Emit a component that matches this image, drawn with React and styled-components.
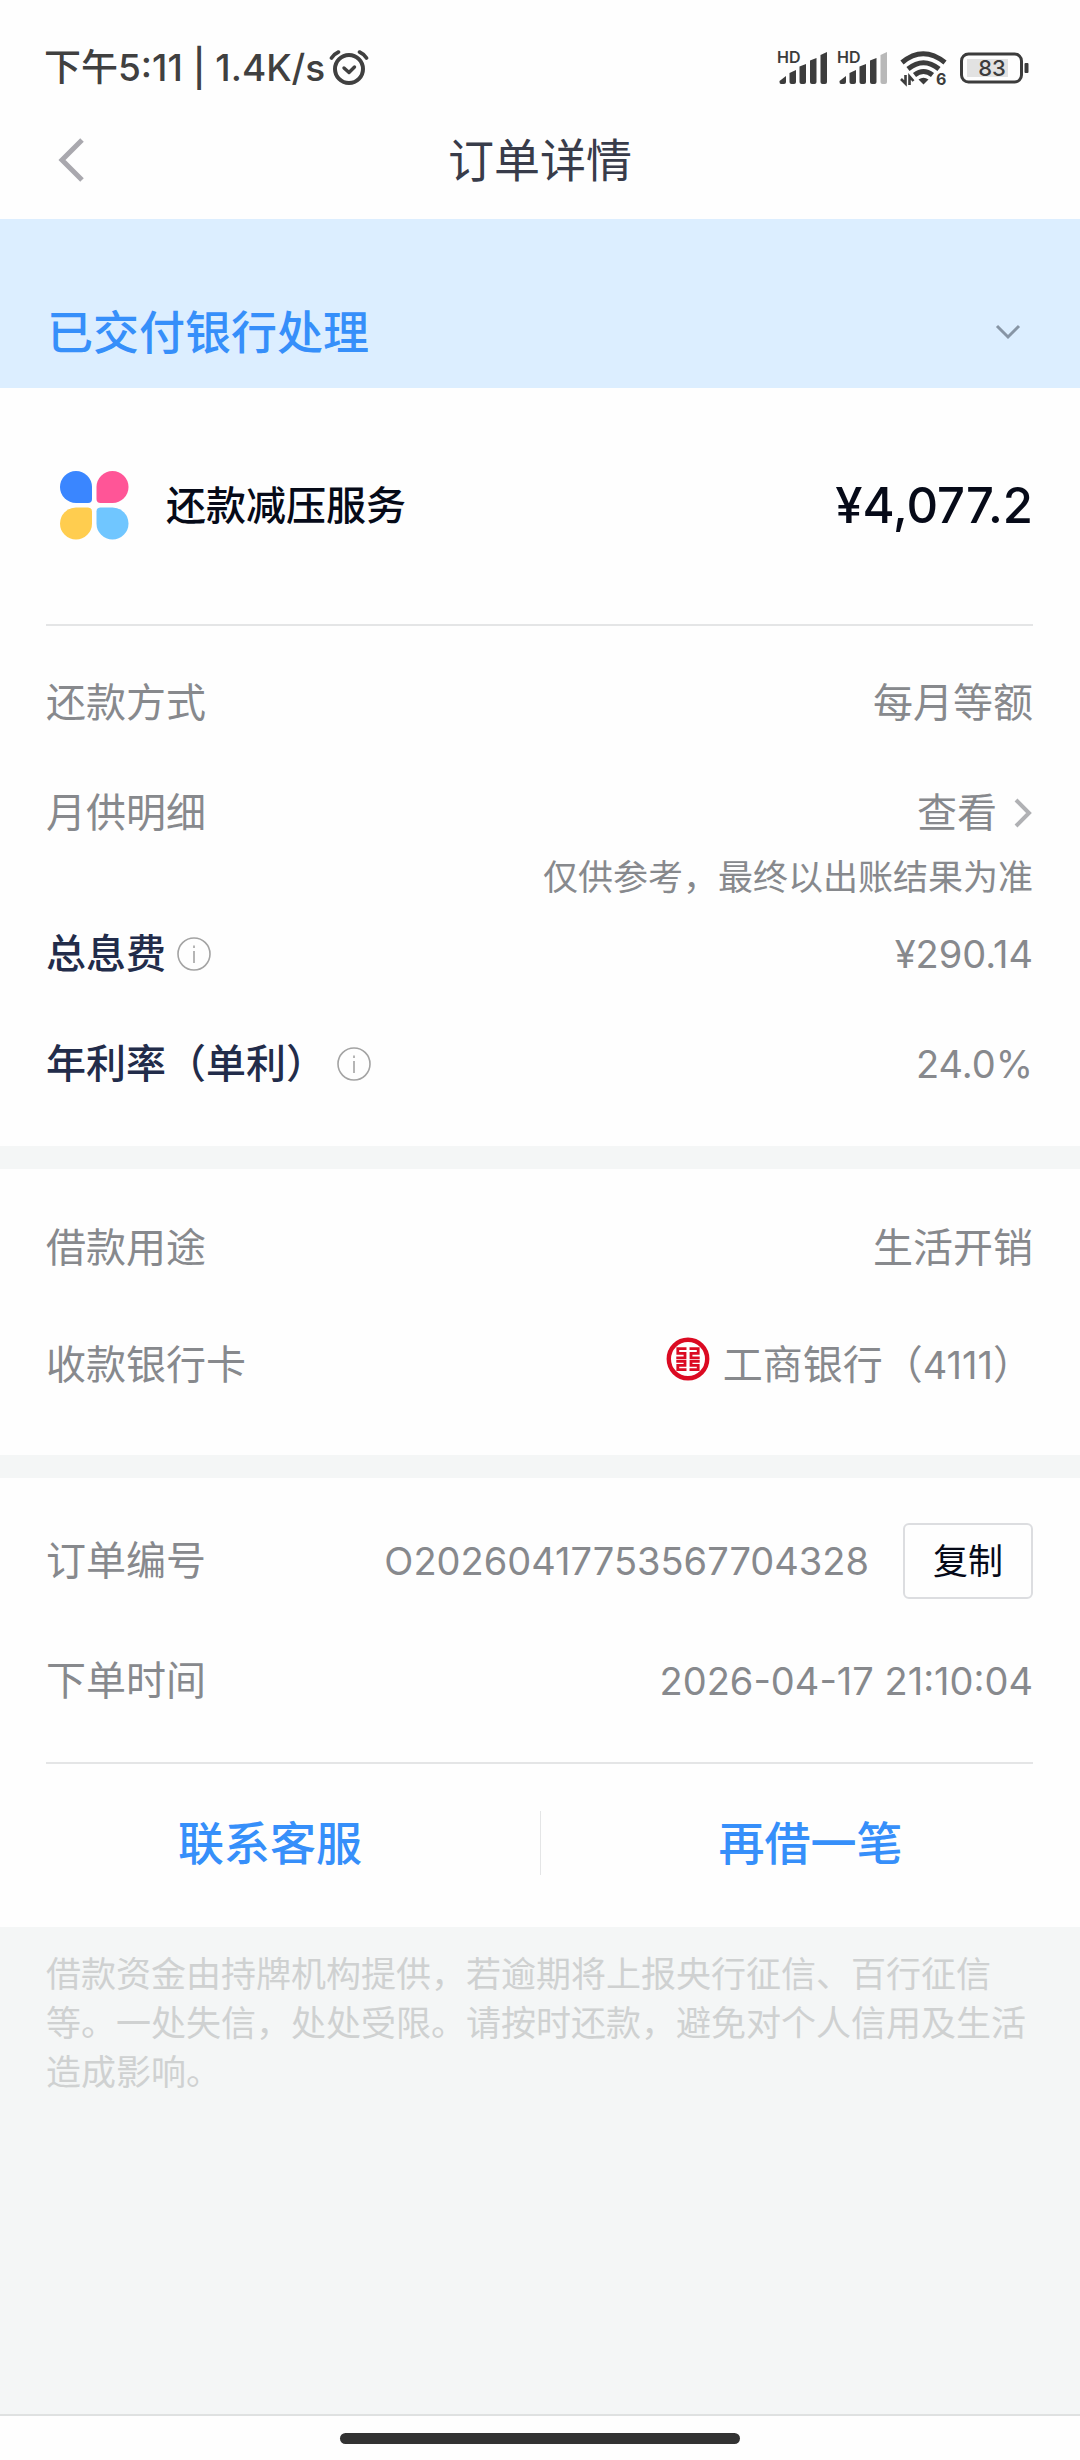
import React, { useState } from "react";
import styled, { createGlobalStyle } from "styled-components";

const rows = {
  method: "每月等额",
  interest: "¥290.14",
  rate: "24.0%",
  usage: "生活开销",
  orderNo: "O20260417753567704328",
  time: "2026-04-17 21:10:04",
};

function AlarmIcon() {
  return (
    <svg width="40" height="36" viewBox="0 0 40 36" fill="none" stroke="#404040" strokeLinecap="round">
      <circle cx="20" cy="19" r="14" strokeWidth="4" />
      <path d="M15 18 L20 22.500 L25.500 17" strokeWidth="3.400" strokeLinejoin="round" />
      <path d="M2.500 8 Q5 4 9.500 2 M37.500 8 Q35 4 30.500 2" strokeWidth="3.600" />
    </svg>
  );
}

function SignalIcon({ weak }) {
  return (
    <svg width="50" height="44" viewBox="0 -4 50 44" fill="#3c3c3c">
      <text x="0" y="13" fontFamily="Inter, sans-serif" fontWeight="600" fontSize="16">
        HD
      </text>
      <path d="M2.500 31 L9 26 V32 Q9 34 7 34 H4 Q2.500 34 2.500 32 Z" />
      <path d="M12.500 23 L19 20 V32 Q19 34 17 34 H14.500 Q12.500 34 12.500 32 Z" />
      <path d="M22.500 16.500 L29 14 V32 Q29 34 27 34 H24.500 Q22.500 34 22.500 32 Z" />
      <path d="M33 10.500 L39.500 8 V32 Q39.500 34 37.500 34 H35 Q33 34 33 32 Z" />
      <path d="M43.500 5 L50 2 V32 Q50 34 48 34 H45.500 Q43.500 34 43.500 32 Z" fill={weak ? "#b8b8b8" : "#3c3c3c"} />
    </svg>
  );
}

function WifiIcon() {
  return (
    <svg width="52" height="44" viewBox="-3 -4 52 44" fill="none" stroke="#3c3c3c">
      <path d="M2 12.500 Q23 -5 45 12.500" strokeWidth="5" />
      <path d="M8 19 Q23.500 6.500 39 19" strokeWidth="5" />
      <path d="M14.500 25 Q23.500 18 32.500 25" strokeWidth="5" />
      <path d="M18.500 29.500 Q23.500 26 28.500 29.500 L23.500 34.500 Z" fill="#3c3c3c" stroke="none" />
      <path d="M1 29 L5.500 33.500 V25 M9.500 35 V26.500 L13.500 31" strokeWidth="2.600" />
      <text x="36" y="35" fontFamily="Inter, sans-serif" fontWeight="700" fontSize="16" fill="#3c3c3c" stroke="none">
        6
      </text>
    </svg>
  );
}

function BatteryIcon() {
  return (
    <svg width="70" height="32" viewBox="0 0 70 32">
      <rect x="8" y="7" width="41" height="18" fill="#e2e2e2" />
      <rect x="2.500" y="2" width="60" height="28" rx="7" fill="none" stroke="#3c3c3c" strokeWidth="3" />
      <rect x="65.500" y="11" width="4" height="10" rx="1" fill="#3c3c3c" />
      <text x="33" y="24" textAnchor="middle" fontFamily="Inter, sans-serif" fontWeight="500" fontSize="22" fill="#3c3c3c">
        83
      </text>
    </svg>
  );
}

function PetalIcon() {
  const petal = "M16 0 A16 16 0 0 1 32 16 V28 A4 4 0 0 1 28 32 H16 A16 16 0 0 1 16 0 Z";
  return (
    <svg width="70" height="70" viewBox="0 0 70 70">
      <path d={petal} fill="#3a86ff" />
      <path d={petal} fill="#ff5597" transform="translate(68.500 0) scale(-1 1)" />
      <path d={petal} fill="#ffcd4f" transform="translate(0 68.500) scale(1 -1)" />
      <path d={petal} fill="#70c6ff" transform="translate(68.500 68.500) scale(-1 -1)" />
    </svg>
  );
}

function BankIcon() {
  return (
    <svg width="44" height="44" viewBox="0 0 44 44" fill="none" stroke="#db0a22">
      <circle cx="22" cy="22" r="19.200" strokeWidth="4.400" />
      <path d="M20.500 11.600 H11.800 V16.400 H19 V20.800 H10.300" strokeWidth="2.800" />
      <path d="M23.500 11.600 H32.200 V16.400 H25 V20.800 H33.700" strokeWidth="2.800" />
      <path d="M10.300 24.400 H19 V28.400 H11.800 V32.600 H20.500" strokeWidth="2.800" />
      <path d="M33.700 24.400 H25 V28.400 H32.200 V32.600 H23.500" strokeWidth="2.800" />
    </svg>
  );
}

function InfoIcon() {
  return (
    <svg width="36" height="36" viewBox="0 0 36 36" fill="none" stroke="#a3a3a3" strokeWidth="1.600">
      <circle cx="18" cy="18" r="16" />
      <path d="M18 15 V27 M18 9.500 V12" />
    </svg>
  );
}

function Chevron({ d, width, height, color, stroke }) {
  return (
    <svg width={width} height={height} viewBox={`0 0 ${width} ${height}`} fill="none" stroke={color} strokeWidth={stroke}>
      <path d={d} />
    </svg>
  );
}

function App() {
  const [open, setOpen] = useState(false);

  const copyOrder = () => {
    if (navigator.clipboard) {
      navigator.clipboard.writeText(rows.orderNo);
    }
  };

  return (
    <Page lang="zh-CN">
      <GlobalStyle />
      <StatusBar>
        <StatusGroup $gap="4px">
          <span>下午5:11 | 1.4K/s</span>
          <AlarmIcon />
        </StatusGroup>
        <StatusGroup $gap="10px">
          <SignalIcon />
          <SignalIcon weak />
          <WifiIcon />
          <BatteryIcon />
        </StatusGroup>
      </StatusBar>
      <NavBar>
        <BackButton aria-label="返回">
          <Chevron width={28} height={44} d="M25 2 L5 22 L25 42" color="#a9a8ae" stroke={5} />
        </BackButton>
        <h1>订单详情</h1>
      </NavBar>
      <Banner onClick={() => setOpen(!open)} aria-expanded={open}>
        <span>已交付银行处理</span>
        <Chevron width={26} height={16} d="M2 2 L13 13 L24 2" color="#8795a5" stroke={3} />
      </Banner>

      <Section>
        <Product>
          <PetalIcon />
          <h2>还款减压服务</h2>
          <strong>¥4,077.2</strong>
        </Product>
        <Divider />
        <Details $top="49px" $bottom="54px">
          <Row>
            <dt>还款方式</dt>
            <dd>{rows.method}</dd>
          </Row>
          <Row $gap="12px">
            <dt>月供明细</dt>
            <dd>
              <ViewLink href="#plan">
                查看
                <Chevron width={20} height={30} d="M3 2 L16 15 L3 28" color="#b0b1b4" stroke={4} />
              </ViewLink>
            </dd>
          </Row>
          <Note>仅供参考，最终以出账结果为准</Note>
          <Row>
            <dt className="strong">
              总息费
              <InfoButton aria-label="总息费说明">
                <InfoIcon />
              </InfoButton>
            </dt>
            <dd>
              <Num>{rows.interest}</Num>
            </dd>
          </Row>
          <Row>
            <dt className="strong">
              年利率（单利）
              <InfoButton aria-label="年利率说明">
                <InfoIcon />
              </InfoButton>
            </dt>
            <dd>
              <Num>{rows.rate}</Num>
            </dd>
          </Row>
        </Details>
      </Section>

      <Section>
        <Details $top="51px" $bottom="62px">
          <Row $gap="61px">
            <dt>借款用途</dt>
            <dd>{rows.usage}</dd>
          </Row>
          <Row>
            <dt>收款银行卡</dt>
            <BankCard>
              <BankIcon />
              <span>
                工商银行（<Num>4111</Num>）
              </span>
            </BankCard>
          </Row>
        </Details>
      </Section>

      <Section>
        <Details $top="45px" $bottom="53px">
          <Row>
            <dt>订单编号</dt>
            <dd>
              <Num>{rows.orderNo}</Num>
              <CopyButton onClick={copyOrder}>复制</CopyButton>
            </dd>
          </Row>
          <Row>
            <dt>下单时间</dt>
            <dd>
              <Num>{rows.time}</Num>
            </dd>
          </Row>
        </Details>
        <Divider />
        <Actions>
          <button>联系客服</button>
          <button>再借一笔</button>
        </Actions>
      </Section>

      <Disclaimer>
        借款资金由持牌机构提供，若逾期将上报央行征信、百行征信等。一处失信，处处受限。请按时还款，避免对个人信用及生活造成影响。
      </Disclaimer>
      <HomeBar>
        <div />
      </HomeBar>
    </Page>
  );
}

const GlobalStyle = createGlobalStyle`
  * {
    box-sizing: border-box;
  }
  body {
    margin: 0;
    background: #f4f6f6;
  }
  h1, h2, p, dl, dd {
    margin: 0;
  }
  button {
    font-family: inherit;
    line-height: inherit;
    border: none;
    background: none;
    padding: 0;
    cursor: pointer;
  }
  svg {
    flex-shrink: 0;
    display: block;
  }
`;

const Page = styled.div`
  display: flex;
  flex-direction: column;
  min-height: 100vh;
  font-family: Inter, "Noto Sans CJK SC", sans-serif;
  font-size: 40px;
  line-height: 56px;
  color: #87898d;
`;

const StatusBar = styled.header`
  display: flex;
  justify-content: space-between;
  align-items: center;
  padding: 40px 51px 4px 44px;
  background: #fefefe;
`;

const StatusGroup = styled.div`
  display: flex;
  align-items: center;
  gap: ${(props) => props.$gap};
  font-size: 37px;
  font-weight: 500;
  color: #404040;
`;

const NavBar = styled.nav`
  display: grid;
  grid-template-columns: 90px 1fr 90px;
  align-items: center;
  height: 119px;
  background: #fefefe;
  h1 {
    font-size: 46px;
    font-weight: 400;
    text-align: center;
    color: #383c4a;
  }
`;

const BackButton = styled.button`
  display: flex;
  justify-content: flex-end;
  padding: 5px;
`;

const Banner = styled.button`
  display: flex;
  justify-content: space-between;
  align-items: center;
  padding: 85px 59px 28px 47px;
  background: #dceeff;
  font-size: 46px;
  font-weight: 500;
  color: #368ffa;
`;

const Section = styled.section`
  background: #fefefe;
  & + & {
    margin-top: 23px;
  }
`;

const Divider = styled.hr`
  height: 2px;
  margin: 0 47px 0 46px;
  border: none;
  background: #e4e5e6;
`;

const Product = styled.div`
  display: flex;
  align-items: center;
  height: 236px;
  padding: 0 47px 0 60px;
  color: #060a18;
  h2 {
    flex: 1;
    margin-left: 36px;
    font-size: 40px;
    font-weight: 500;
  }
  strong {
    font-size: 49px;
    font-weight: 500;
  }
`;

const Details = styled.dl`
  padding: ${(props) => props.$top} 47px ${(props) => props.$bottom} 46px;
`;

const Row = styled.div`
  display: flex;
  justify-content: space-between;
  align-items: center;
  margin-bottom: ${(props) => props.$gap || "54px"};
  &:last-child {
    margin-bottom: 0;
  }
  dt,
  dd {
    display: flex;
    align-items: center;
  }
  .strong {
    font-weight: 500;
    color: #222c4a;
  }
`;

const Num = styled.span`
  font-size: 38px;
`;

const Note = styled.p`
  margin-bottom: 25px;
  font-size: 35px;
  line-height: 48px;
  text-align: right;
`;

const ViewLink = styled.a`
  display: flex;
  align-items: center;
  gap: 16px;
  color: inherit;
  text-decoration: none;
`;

const InfoButton = styled.button`
  margin-left: 10px;
`;

const BankCard = styled.dd`
  gap: 13px;
  svg {
    align-self: flex-start;
  }
`;

const CopyButton = styled.button`
  width: 130px;
  height: 76px;
  margin-left: 34px;
  border: 2px solid #dcdde0;
  border-radius: 6px;
  font-size: 35px;
  color: #060a18;
`;

const Actions = styled.div`
  display: grid;
  grid-template-columns: 1fr 1fr;
  padding: 47px 0 52px;
  button {
    height: 64px;
    font-size: 46px;
    font-weight: 500;
    color: #368ffa;
  }
  button + button {
    border-left: 1px solid #e4e5e6;
  }
`;

const Disclaimer = styled.p`
  padding: 23px 47px 40px 46px;
  font-size: 35px;
  line-height: 49px;
  color: #cfd1d1;
`;

const HomeBar = styled.footer`
  display: flex;
  justify-content: center;
  margin-top: auto;
  padding: 17px 0 16px;
  border-top: 2px solid #dfe1e1;
  background: #fefefe;
  div {
    width: 37%;
    height: 11px;
    border-radius: 6px;
    background: #323232;
  }
`;

export default App;
